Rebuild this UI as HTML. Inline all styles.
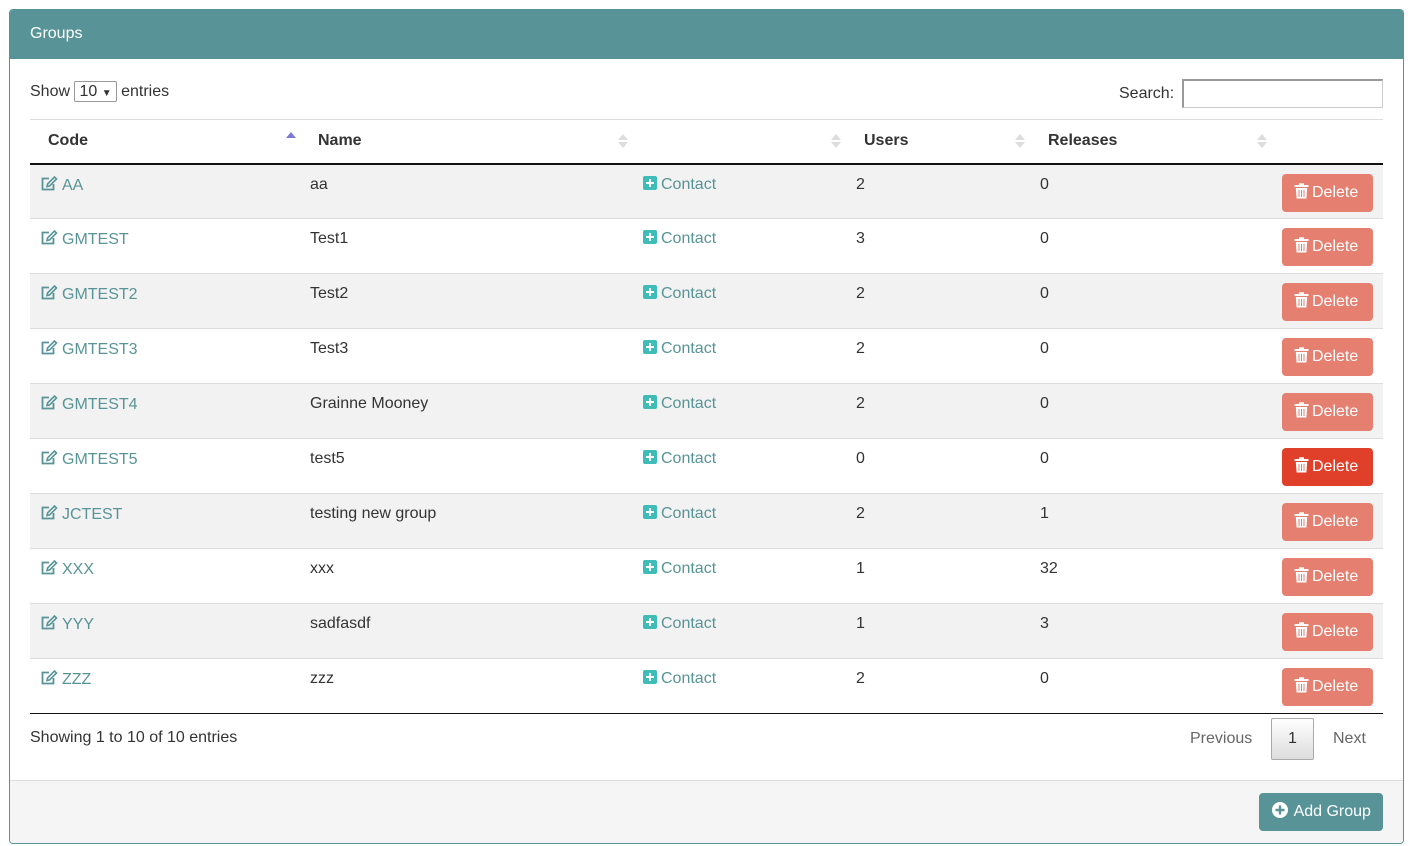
<!DOCTYPE html>
<html><head><meta charset="utf-8"><style>
*{box-sizing:border-box;margin:0;padding:0}
body{width:1410px;height:846px;background:#fff;font-family:"Liberation Sans",sans-serif;font-size:16px;color:#333;position:relative;overflow:hidden}
.panel{position:absolute;left:9px;top:9px;width:1395px;height:835px;border:1px solid #589497;border-radius:4px;overflow:hidden}
.ph{height:49px;background:#589497;color:#fff;padding:15px 20px;font-size:16px}
.ab{position:absolute}
.foot{position:absolute;left:0;right:0;top:770px;bottom:0;background:#f5f5f5;border-top:1px solid #ddd}
table{position:absolute;left:20px;top:109px;width:1353px;border-collapse:collapse}
th{height:44px;text-align:left;font-weight:bold;padding:0 18px;border-top:1px solid #ddd;border-bottom:2px solid #111;position:relative}
td{height:55px;vertical-align:top;padding:11px 10px 0;border-top:1px solid #ddd}
tr.o td{background:#f2f2f2}
tbody tr:last-child td{border-bottom:1px solid #111}
.s{position:absolute;top:14px;width:10px;height:16px}
.s:before{content:"";position:absolute;left:0;top:0;border:5px solid transparent;border-bottom:6px solid #ddd;border-top:0}
.s:after{content:"";position:absolute;left:0;top:8px;border:5px solid transparent;border-top:6px solid #ddd;border-bottom:0}
.up{top:12px}.up:after{display:none}.up:before{border-bottom-color:#7b7bd6}
a{color:#589497;text-decoration:none}
.e{display:inline-block;width:18px;height:16px;vertical-align:-2px;margin-right:4px}
.del{float:right;width:91px;height:38px;background:#e57f70;color:#fff;border-radius:4px;padding:9px 0 0 12px;margin-top:-2px}
.del.r{background:#e0402a}
.del svg{width:15px;height:16px;vertical-align:-2px;margin-right:3px}
.ct{display:inline-block;width:14px;height:14px;background:#3ebdb8;border-radius:2px;position:relative;vertical-align:-1px;margin-right:4px}
.ct:before{content:"";position:absolute;left:3px;top:6px;width:8px;height:2px;background:#fff}
.ct:after{content:"";position:absolute;left:6px;top:3px;width:2px;height:8px;background:#fff}
</style></head><body>
<svg width="0" height="0" style="position:absolute"><defs>
<symbol id="ed" viewBox="0 0 18 16"><path d="M9 2.5H2.5v11h11V8" fill="none" stroke="#589497" stroke-width="1.8"/><path d="M7 10.5l0.6-2.6L14.5 1l2 2-6.9 6.9z" fill="none" stroke="#589497" stroke-width="1.6"/></symbol>
<symbol id="tr" viewBox="0 0 15 16"><rect x="0.5" y="2" width="14" height="2" fill="#fff"/><rect x="5" y="0.3" width="5" height="2" fill="#fff"/><path d="M1.8 5h11.4l-0.8 10.5H2.6z" fill="#fff"/><path d="M5 7v7M7.5 7v7M10 7v7" stroke="#e57f70" stroke-width="1"/></symbol>
</defs></svg>
<div class="panel">
<div class="ph">Groups</div>
<div class="ab" style="left:20px;top:71px">Show <span style="display:inline-block;border:1px solid #999;border-radius:2px;padding:0 4px;height:21px;line-height:19px">10 <span style="font-size:10px">▼</span></span> entries</div>
<div class="ab" style="left:1109px;top:75px">Search:</div>
<div class="ab" style="left:1172px;top:69px;width:201px;height:29px;border:1px solid #ccc;border-top:2px solid #999;border-left:2px solid #999"></div>
<table>
<thead><tr>
<th style="width:270px">Code<span class="s up" style="left:256px"></span></th>
<th style="width:333px">Name<span class="s" style="left:318px"></span></th>
<th style="width:213px"><span class="s" style="left:198px"></span></th>
<th style="width:184px">Users<span class="s" style="left:169px"></span></th>
<th style="width:242px">Releases<span class="s" style="left:227px"></span></th>
<th></th></tr></thead>
<tbody>
<tr class="o"><td><a><svg class="e"><use href="#ed"/></svg>AA</a></td><td>aa</td><td><a><span class="ct"></span>Contact</a></td><td>2</td><td>0</td><td><span class="del"><svg><use href="#tr"/></svg>Delete</span></td></tr>
<tr><td><a><svg class="e"><use href="#ed"/></svg>GMTEST</a></td><td>Test1</td><td><a><span class="ct"></span>Contact</a></td><td>3</td><td>0</td><td><span class="del"><svg><use href="#tr"/></svg>Delete</span></td></tr>
<tr class="o"><td><a><svg class="e"><use href="#ed"/></svg>GMTEST2</a></td><td>Test2</td><td><a><span class="ct"></span>Contact</a></td><td>2</td><td>0</td><td><span class="del"><svg><use href="#tr"/></svg>Delete</span></td></tr>
<tr><td><a><svg class="e"><use href="#ed"/></svg>GMTEST3</a></td><td>Test3</td><td><a><span class="ct"></span>Contact</a></td><td>2</td><td>0</td><td><span class="del"><svg><use href="#tr"/></svg>Delete</span></td></tr>
<tr class="o"><td><a><svg class="e"><use href="#ed"/></svg>GMTEST4</a></td><td>Grainne Mooney</td><td><a><span class="ct"></span>Contact</a></td><td>2</td><td>0</td><td><span class="del"><svg><use href="#tr"/></svg>Delete</span></td></tr>
<tr><td><a><svg class="e"><use href="#ed"/></svg>GMTEST5</a></td><td>test5</td><td><a><span class="ct"></span>Contact</a></td><td>0</td><td>0</td><td><span class="del r"><svg><use href="#tr"/></svg>Delete</span></td></tr>
<tr class="o"><td><a><svg class="e"><use href="#ed"/></svg>JCTEST</a></td><td>testing new group</td><td><a><span class="ct"></span>Contact</a></td><td>2</td><td>1</td><td><span class="del"><svg><use href="#tr"/></svg>Delete</span></td></tr>
<tr><td><a><svg class="e"><use href="#ed"/></svg>XXX</a></td><td>xxx</td><td><a><span class="ct"></span>Contact</a></td><td>1</td><td>32</td><td><span class="del"><svg><use href="#tr"/></svg>Delete</span></td></tr>
<tr class="o"><td><a><svg class="e"><use href="#ed"/></svg>YYY</a></td><td>sadfasdf</td><td><a><span class="ct"></span>Contact</a></td><td>1</td><td>3</td><td><span class="del"><svg><use href="#tr"/></svg>Delete</span></td></tr>
<tr><td><a><svg class="e"><use href="#ed"/></svg>ZZZ</a></td><td>zzz</td><td><a><span class="ct"></span>Contact</a></td><td>2</td><td>0</td><td><span class="del"><svg><use href="#tr"/></svg>Delete</span></td></tr>
</tbody></table>
<div class="ab" style="left:20px;top:719px">Showing 1 to 10 of 10 entries</div>
<div class="ab" style="left:1180px;top:720px;color:#666">Previous</div>
<div class="ab" style="left:1261px;top:708px;width:43px;height:42px;border:1px solid #aaa;border-radius:2px;background:linear-gradient(#fff,#ddd);text-align:center;line-height:40px">1</div>
<div class="ab" style="left:1323px;top:720px;color:#666">Next</div>
<div class="foot"></div>
<div class="ab" style="left:1249px;top:783px;width:124px;height:38px;background:#589497;color:#fff;border-radius:4px;padding:9px 0 0 13px"><svg width="16" height="16" viewBox="0 0 16 16" style="vertical-align:-2px;margin-right:2px"><circle cx="8" cy="8" r="8" fill="#fff"/><path d="M8 3.5v9M3.5 8h9" stroke="#589497" stroke-width="2.4"/></svg> Add Group</div>
</div>
</body></html>
